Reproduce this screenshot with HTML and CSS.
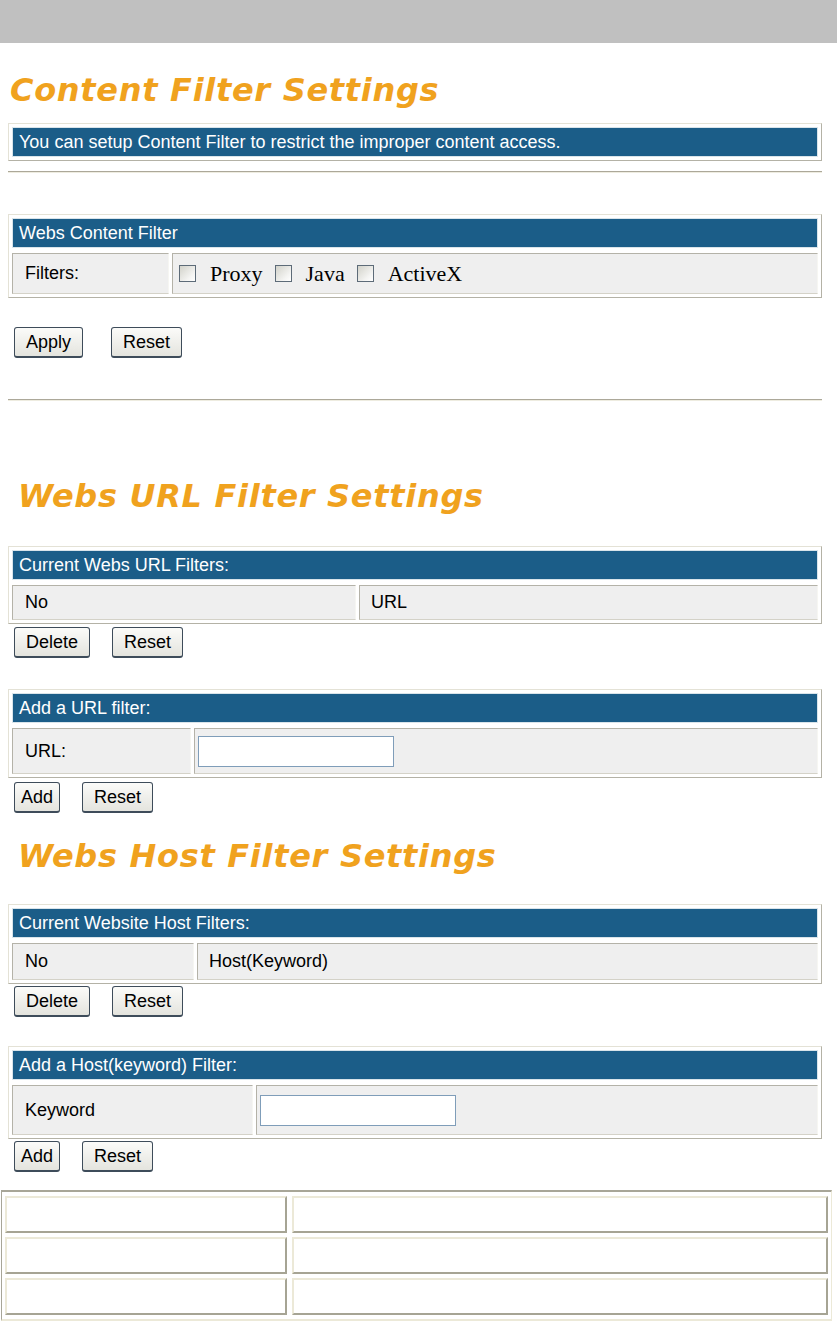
FILE: index.html
```html
<!DOCTYPE html>
<html>
<head>
<meta charset="utf-8">
<title>Content Filter Settings</title>
<link rel="stylesheet" href="styles.css">
</head>
<body>
<div class="topbar"></div>
<main class="page">
  <h1 class="title title-first">Content Filter Settings</h1>
  <div class="panel panel-info">
    <div class="panel-head">You can setup Content Filter to restrict the improper content access.</div>
  </div>
  <hr class="rule rule-top">

  <div class="panel panel-content">
    <div class="panel-head">Webs Content Filter</div>
    <div class="panel-row row-content">
      <div class="cell cell-label w-filters">Filters:</div>
      <div class="cell cell-value checks">
        <label class="check"><input type="checkbox"><span>Proxy</span></label>
        <label class="check"><input type="checkbox"><span>Java</span></label>
        <label class="check"><input type="checkbox"><span>ActiveX</span></label>
      </div>
    </div>
  </div>
  <div class="actions actions-apply">
    <button class="btn">Apply</button>
    <button class="btn">Reset</button>
  </div>
  <hr class="rule rule-bottom">

  <h2 class="title title-url">Webs URL Filter Settings</h2>
  <div class="panel panel-url-list">
    <div class="panel-head">Current Webs URL Filters:</div>
    <div class="panel-row row-url-list">
      <div class="cell cell-label w-url-no">No</div>
      <div class="cell cell-value cell-text">URL</div>
    </div>
  </div>
  <div class="actions actions-url-list">
    <button class="btn">Delete</button>
    <button class="btn">Reset</button>
  </div>

  <div class="panel panel-url-add">
    <div class="panel-head">Add a URL filter:</div>
    <div class="panel-row row-url-add">
      <div class="cell cell-label w-url-label">URL:</div>
      <div class="cell cell-value"><input class="field" type="text"></div>
    </div>
  </div>
  <div class="actions actions-url-add">
    <button class="btn btn-tight">Add</button>
    <button class="btn">Reset</button>
  </div>

  <h2 class="title title-host">Webs Host Filter Settings</h2>
  <div class="panel panel-host-list">
    <div class="panel-head">Current Website Host Filters:</div>
    <div class="panel-row row-host-list">
      <div class="cell cell-label w-host-no">No</div>
      <div class="cell cell-value cell-text">Host(Keyword)</div>
    </div>
  </div>
  <div class="actions actions-host-list">
    <button class="btn">Delete</button>
    <button class="btn">Reset</button>
  </div>

  <div class="panel panel-host-add">
    <div class="panel-head">Add a Host(keyword) Filter:</div>
    <div class="panel-row row-host-add">
      <div class="cell cell-label w-host-label">Keyword</div>
      <div class="cell cell-value"><input class="field" type="text"></div>
    </div>
  </div>
  <div class="actions actions-host-add">
    <button class="btn btn-tight">Add</button>
    <button class="btn">Reset</button>
  </div>
</main>

<div class="summary">
  <div class="sum-cell"></div><div class="sum-cell"></div>
  <div class="sum-cell"></div><div class="sum-cell"></div>
  <div class="sum-cell"></div><div class="sum-cell"></div>
</div>
</body>
</html>
```

FILE: styles.css
```css
* { box-sizing: border-box; }

html, body {
  margin: 0;
  background: #ffffff;
}

body {
  width: 837px;
  font-family: "Liberation Sans", Arial, sans-serif;
  font-size: 18px;
  color: #000000;
}

.topbar {
  height: 43px;
  background: #c0c0c0;
}

.page {
  padding: 0 15px 0 8px;
}

/* Orange section titles */
.title {
  margin: 0;
  font-family: "DejaVu Sans", Verdana, sans-serif;
  font-weight: bold;
  font-style: oblique;
  font-size: 32px;
  line-height: 36px;
  letter-spacing: 0.7px;
  color: #f0a21e;
  white-space: nowrap;
}
.title-first { margin-top: 29px; padding-left: 2px; }
.title-url   { margin-top: 77px; padding-left: 10px; }
.title-host  { margin-top: 25px; padding-left: 10px; }

/* Bordered panels with blue header */
.panel {
  display: flex;
  flex-direction: column;
  gap: 5px;
  padding: 3px;
  border: 1px solid;
  border-color: #e4e2d6 #b4b2a6 #b4b2a6 #e4e2d6;
}

.panel-info      { margin-top: 15px; }
.panel-content   { margin-top: 41px; }
.panel-url-list  { margin-top: 32px; }
.panel-url-add   { margin-top: 31px; }
.panel-host-list { margin-top: 30px; }
.panel-host-add  { margin-top: 29px; }

.panel-head {
  height: 30px;
  padding-left: 6px;
  background: #1b5d88;
  border: 1px solid #d9e4ea;
  color: #ffffff;
  line-height: 28px;
  white-space: nowrap;
}

.panel-row {
  display: flex;
  gap: 3px;
}
.row-content   { height: 41px; }
.row-url-list  { height: 35px; }
.row-url-add   { height: 46px; }
.row-host-list { height: 37px; }
.row-host-add  { height: 50px; }

.cell {
  display: flex;
  align-items: center;
  background: #efefef;
  border: 1px solid;
  border-color: #b4b2a8 #f6f6f2 #d4d2c8 #b4b2a8;
}

.cell-label { padding-left: 12px; }
.cell-value { flex: 1; padding-left: 3px; }
.cell-text  { padding-left: 11px; }

.w-filters    { flex: 0 0 157px; }
.w-url-no     { flex: 0 0 344px; }
.w-url-label  { flex: 0 0 179px; }
.w-host-no    { flex: 0 0 182px; }
.w-host-label { flex: 0 0 241px; }

/* Checkboxes */
.checks {
  padding-left: 6px;
  gap: 12px;
}
.check {
  display: flex;
  align-items: center;
  gap: 14px;
  font-family: "Liberation Serif", "Times New Roman", serif;
  font-size: 22px;
}
.check input {
  appearance: none;
  -webkit-appearance: none;
  margin: 0;
  width: 17px;
  height: 17px;
  border: 1px solid #5d6b78;
  background: linear-gradient(135deg, #d2d2ca 0%, #f4f4f2 70%, #ffffff 100%);
}

/* Text inputs */
.field {
  width: 196px;
  height: 31px;
  margin: 0;
  border: 1px solid #7f9db9;
  background: #ffffff;
  font: inherit;
}

/* Buttons */
.actions {
  display: flex;
  gap: 22px;
  padding-left: 6px;
}
.actions-apply     { margin-top: 29px; gap: 28px; }
.actions-url-list  { margin-top: 3px; }
.actions-url-add   { margin-top: 4px; }
.actions-host-list { margin-top: 2px; }
.actions-host-add  { margin-top: 2px; }

.btn {
  height: 31px;
  padding: 0 11px;
  margin: 0;
  font-family: "Liberation Sans", Arial, sans-serif;
  font-size: 18px;
  color: #000000;
  background: linear-gradient(#fbfbf9, #e4e4de);
  border: 1px solid #3e4c5a;
  border-bottom-width: 2px;
  border-radius: 3px;
}
.btn-tight { padding: 0 6px; }

/* Horizontal rules */
.rule {
  height: 2px;
  margin: 0;
  border: 0;
  border-top: 1px solid #aca899;
  border-bottom: 1px solid #eeece0;
}
.rule-top    { margin-top: 10px; }
.rule-bottom { margin-top: 41px; }

/* Empty bottom table */
.summary {
  display: grid;
  grid-template-columns: 282px 1fr;
  grid-auto-rows: 37px;
  gap: 4px 5px;
  width: 831px;
  margin: 18px 0 0 1px;
  padding: 4px 3px;
  border-top: 2px solid #a8a698;
  border-left: 1px solid #a8a698;
  border-right: 1px solid #ece9d8;
  border-bottom: 2px solid #ece9d8;
}
.sum-cell {
  background: #ffffff;
  border: 2px solid;
  border-color: #ece9d8 #a6a494 #a6a494 #ece9d8;
}
```
